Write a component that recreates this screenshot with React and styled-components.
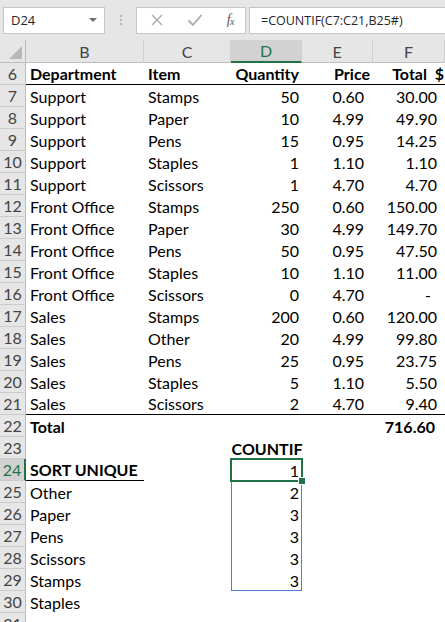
import React from 'react';
import styled, { createGlobalStyle } from 'styled-components';

const GlobalStyle = createGlobalStyle`
  body {
    margin: 0;
    background: #ffffff;
    font-family: Lato, "Liberation Sans", sans-serif;
  }
`;

const GREEN = '#217346';
const SPILL = '#4f7fd1';

const Window = styled.div`
  width: 445px;
  height: 622px;
  overflow: hidden;
  background: #ffffff;
`;

const FormulaBar = styled.div`
  display: flex;
  align-items: center;
  height: 40px;
  padding-left: 3px;
  background: #e6e6e6;
  font-family: "Open Sans", "Noto Sans", sans-serif;
  font-size: 13px;
  color: #262626;
`;

const NameBox = styled.div`
  display: flex;
  align-items: center;
  justify-content: space-between;
  box-sizing: border-box;
  width: 102px;
  height: 27px;
  padding: 0 7px 0 7px;
  background: #ffffff;
  border: 1px solid #c6c6c6;
`;

const Caret = styled.span`
  width: 0;
  height: 0;
  border-left: 4px solid transparent;
  border-right: 4px solid transparent;
  border-top: 4px solid #6d6d6d;
`;

const Grip = styled.div`
  display: flex;
  flex-direction: column;
  gap: 2px;
  margin: 0 14px 0 15px;
  span {
    width: 2px;
    height: 2px;
    background: #b4b4b4;
  }
`;

const ActionBox = styled.div`
  display: flex;
  align-items: center;
  justify-content: space-between;
  box-sizing: border-box;
  width: 110px;
  height: 27px;
  padding: 0 11px 0 13px;
  background: #ffffff;
  border: 1px solid #c6c6c6;
`;

const Fx = styled.span`
  font-family: "Liberation Serif", serif;
  font-style: italic;
  font-size: 14px;
  color: #555;
  letter-spacing: -0.5px;
  sub {
    font-size: 10px;
    vertical-align: -1px;
  }
`;

const FormulaInput = styled.div`
  flex: 1;
  display: flex;
  align-items: center;
  box-sizing: border-box;
  height: 27px;
  margin-left: 3px;
  padding-left: 11px;
  background: #ffffff;
  border: 1px solid #c6c6c6;
  border-right: none;
  white-space: nowrap;
  font-size: 12.5px;
`;

const Sheet = styled.div`
  display: grid;
  grid-template-columns: 26px 118px 87px 71px 71px 72px;
  grid-template-rows: 23px;
  grid-auto-rows: 22px;
  font-size: 16px;
  color: #000;
`;

const Corner = styled.div`
  position: relative;
  background: #e6e6e6;
  border-right: 1px solid #bdbdbd;
  border-bottom: 1px solid #bdbdbd;
  box-sizing: border-box;
  &::after {
    content: '';
    position: absolute;
    right: 3px;
    bottom: 3px;
    border-left: 13px solid transparent;
    border-bottom: 13px solid #b7b7b7;
  }
`;

const ColHeader = styled.div`
  display: flex;
  align-items: center;
  justify-content: center;
  box-sizing: border-box;
  background: ${(p) => (p.$active ? '#d2d2d2' : '#e6e6e6')};
  color: ${(p) => (p.$active ? GREEN : '#444')};
  border-right: 1px solid #cfcfcf;
  border-bottom: ${(p) => (p.$active ? `2px solid ${GREEN}` : '1px solid #bdbdbd')};
  font-size: 16px;
`;

const RowHeader = styled.div`
  display: flex;
  align-items: center;
  justify-content: center;
  box-sizing: border-box;
  background: ${(p) => (p.$active ? '#d2d2d2' : '#e6e6e6')};
  color: ${(p) => (p.$active ? GREEN : '#444')};
  border-bottom: 1px solid #cbcbcb;
  border-right: ${(p) => (p.$active ? `2px solid ${GREEN}` : '1px solid #bdbdbd')};
  font-size: 16px;
`;

const Cell = styled.div`
  position: relative;
  display: flex;
  align-items: center;
  justify-content: ${(p) => (p.$align === 'right' ? 'flex-end' : p.$align === 'center' ? 'center' : 'flex-start')};
  box-sizing: border-box;
  padding: 0 ${(p) => p.$pr ?? 3}px 0 4px;
  font-weight: ${(p) => (p.$bold ? 700 : 400)};
  border-bottom: ${(p) => (p.$rule ? '1px solid #000' : 'none')};
  white-space: nowrap;
`;

const Selection = styled.div`
  position: absolute;
  z-index: 3;
  left: -1px;
  top: -1px;
  right: -1px;
  bottom: -1px;
  border: 2px solid ${GREEN};
  pointer-events: none;
  &::after {
    content: '';
    position: absolute;
    right: -5px;
    bottom: -5px;
    width: 6px;
    height: 6px;
    background: ${GREEN};
    border: 1px solid #fff;
  }
`;

const SpillRange = styled.div`
  position: absolute;
  z-index: 2;
  left: 0;
  top: 0;
  width: 71px;
  height: ${(p) => p.$rows * 22}px;
  box-sizing: border-box;
  border: 1px solid ${SPILL};
  pointer-events: none;
`;

const data = [
  ['Support', 'Stamps', '50', '0.60', '30.00'],
  ['Support', 'Paper', '10', '4.99', '49.90'],
  ['Support', 'Pens', '15', '0.95', '14.25'],
  ['Support', 'Staples', '1', '1.10', '1.10'],
  ['Support', 'Scissors', '1', '4.70', '4.70'],
  ['Front Office', 'Stamps', '250', '0.60', '150.00'],
  ['Front Office', 'Paper', '30', '4.99', '149.70'],
  ['Front Office', 'Pens', '50', '0.95', '47.50'],
  ['Front Office', 'Staples', '10', '1.10', '11.00'],
  ['Front Office', 'Scissors', '0', '4.70', '-'],
  ['Sales', 'Stamps', '200', '0.60', '120.00'],
  ['Sales', 'Other', '20', '4.99', '99.80'],
  ['Sales', 'Pens', '25', '0.95', '23.75'],
  ['Sales', 'Staples', '5', '1.10', '5.50'],
  ['Sales', 'Scissors', '2', '4.70', '9.40'],
];

const unique = [
  ['Other', '2'],
  ['Paper', '3'],
  ['Pens', '3'],
  ['Scissors', '3'],
  ['Stamps', '3'],
  ['Staples', ''],
  ['', ''],
];

const XIcon = () => (
  <svg width="14" height="14" viewBox="0 0 14 14">
    <path d="M2 2 L12 12 M12 2 L2 12" stroke="#a9a9a9" strokeWidth="1.4" fill="none" />
  </svg>
);

const CheckIcon = () => (
  <svg width="16" height="14" viewBox="0 0 16 14">
    <path d="M1.5 7.5 L6 12 L14.5 2" stroke="#a9a9a9" strokeWidth="1.8" fill="none" />
  </svg>
);

const App = () => {
  return (
    <Window>
      <GlobalStyle />
      <FormulaBar>
        <NameBox>
          <span>D24</span>
          <Caret />
        </NameBox>
        <Grip>
          <span />
          <span />
          <span />
        </Grip>
        <ActionBox>
          <XIcon />
          <CheckIcon />
          <Fx>
            f<sub>x</sub>
          </Fx>
        </ActionBox>
        <FormulaInput>=COUNTIF(C7:C21,B25#)</FormulaInput>
      </FormulaBar>

      <Sheet>
        <Corner />
        {['B', 'C', 'D', 'E', 'F'].map((c) => (
          <ColHeader key={c} $active={c === 'D'}>
            {c}
          </ColHeader>
        ))}

        <RowHeader>6</RowHeader>
        <Cell $bold $rule>Department</Cell>
        <Cell $bold $rule>Item</Cell>
        <Cell $bold $rule $align="right">Quantity</Cell>
        <Cell $bold $rule $align="right">Price</Cell>
        <Cell $bold $rule $align="right" $pr={1}>Total&nbsp;&nbsp;$</Cell>

        {data.map((r, i) => {
          const last = i === data.length - 1;
          return (
            <React.Fragment key={i}>
              <RowHeader>{7 + i}</RowHeader>
              <Cell $rule={last}>{r[0]}</Cell>
              <Cell $rule={last}>{r[1]}</Cell>
              <Cell $rule={last} $align="right">{r[2]}</Cell>
              <Cell $rule={last} $align="right" $pr={9}>{r[3]}</Cell>
              <Cell $rule={last} $align="right" $pr={r[4] === '-' ? 14 : 8}>{r[4]}</Cell>
            </React.Fragment>
          );
        })}

        <RowHeader>22</RowHeader>
        <Cell $bold>Total</Cell>
        <Cell />
        <Cell />
        <Cell />
        <Cell $bold $align="right" $pr={10}>716.60</Cell>

        <RowHeader>23</RowHeader>
        <Cell />
        <Cell />
        <Cell $bold $align="center">COUNTIF</Cell>
        <Cell />
        <Cell />

        <RowHeader $active>24</RowHeader>
        <Cell $bold $rule>SORT UNIQUE</Cell>
        <Cell />
        <Cell $align="right">
          1
          <SpillRange $rows={6} />
          <Selection />
        </Cell>
        <Cell />
        <Cell />

        {unique.map((u, i) => (
          <React.Fragment key={i}>
            <RowHeader>{25 + i}</RowHeader>
            <Cell>{u[0]}</Cell>
            <Cell />
            <Cell $align="right">{u[1]}</Cell>
            <Cell />
            <Cell />
          </React.Fragment>
        ))}
      </Sheet>
    </Window>
  );
};

export default App;
